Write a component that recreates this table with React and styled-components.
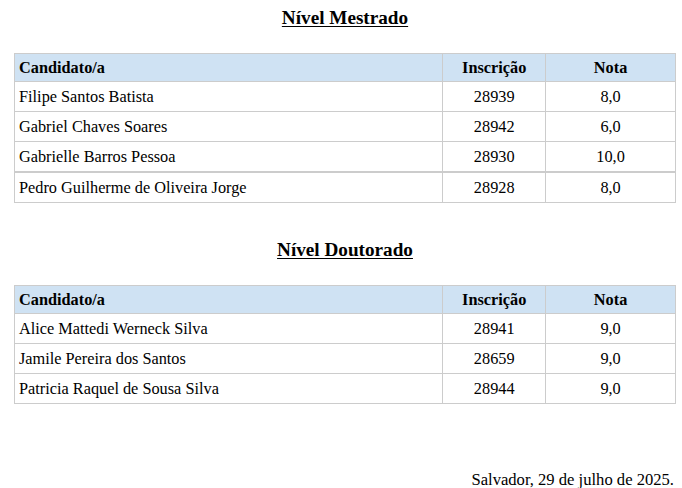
import React from 'react'
import styled, { createGlobalStyle } from 'styled-components'

const serif = '"Liberation Serif", "Times New Roman", serif'

const GlobalStyle = createGlobalStyle`
  body {
    margin: 0;
    background: #fff;
    font-family: ${serif};
    color: #000;
  }
`

const Page = styled.div`
  padding: 8px 6px 0 14px;
  width: 662px;
`

const Title = styled.h2`
  margin: 0 0 25px;
  text-align: center;
  font-family: ${serif};
  font-size: 19.2px;
  line-height: 20px;
  font-weight: bold;
  text-decoration: underline;
  text-underline-offset: 2px;
`

const Section = styled.section`
  & + & {
    margin-top: 37px;
  }
`

const Table = styled.table`
  width: 662px;
  border-collapse: collapse;
`

const Th = styled.th`
  background: #cfe2f3;
  border: 1px solid #cccccc;
  padding: 4px 4px;
  font-family: ${serif};
  font-size: 16.3px;
  line-height: 19px;
  text-align: ${p => (p.$left ? 'left' : 'center')};
  font-weight: bold;
`

const Td = styled.td`
  border: 1px solid #cccccc;
  border-top-width: ${p => (p.$thick ? '2px' : '1px')};
  padding: 5px 4px;
  font-family: ${serif};
  font-size: 16.3px;
  line-height: 19px;
  text-align: ${p => (p.$left ? 'left' : 'center')};
`

const Footer = styled.p`
  margin: 66px 0 0;
  text-align: right;
  font-family: ${serif};
  font-size: 16.6px;
  line-height: 19px;
  padding-right: 2px;
`

const mestrado = [
  { nome: 'Filipe Santos Batista', inscricao: '28939', nota: '8,0' },
  { nome: 'Gabriel Chaves Soares', inscricao: '28942', nota: '6,0' },
  { nome: 'Gabrielle Barros Pessoa', inscricao: '28930', nota: '10,0' },
  { nome: 'Pedro Guilherme de Oliveira Jorge', inscricao: '28928', nota: '8,0', thick: true }
]

const doutorado = [
  { nome: 'Alice Mattedi Werneck Silva', inscricao: '28941', nota: '9,0' },
  { nome: 'Jamile Pereira dos Santos', inscricao: '28659', nota: '9,0' },
  { nome: 'Patricia Raquel de Sousa Silva', inscricao: '28944', nota: '9,0' }
]

const ResultTable = ({ title, rows }) => (
  <Section>
    <Title>{title}</Title>
    <Table>
      <colgroup>
        <col style={{ width: 429 }} />
        <col style={{ width: 103 }} />
        <col style={{ width: 130 }} />
      </colgroup>
      <thead>
        <tr>
          <Th $left>Candidato/a</Th>
          <Th>Inscrição</Th>
          <Th>Nota</Th>
        </tr>
      </thead>
      <tbody>
        {rows.map((row, index) => (
          <tr key={index}>
            <Td $left $thick={row.thick}>{row.nome}</Td>
            <Td $thick={row.thick}>{row.inscricao}</Td>
            <Td $thick={row.thick}>{row.nota}</Td>
          </tr>
        ))}
      </tbody>
    </Table>
  </Section>
)

export default function App() {
  return (
    <>
      <GlobalStyle />
      <Page>
        <ResultTable title="Nível Mestrado" rows={mestrado} />
        <ResultTable title="Nível Doutorado" rows={doutorado} />
        <Footer>Salvador, 29 de julho de 2025.</Footer>
      </Page>
    </>
  )
}
